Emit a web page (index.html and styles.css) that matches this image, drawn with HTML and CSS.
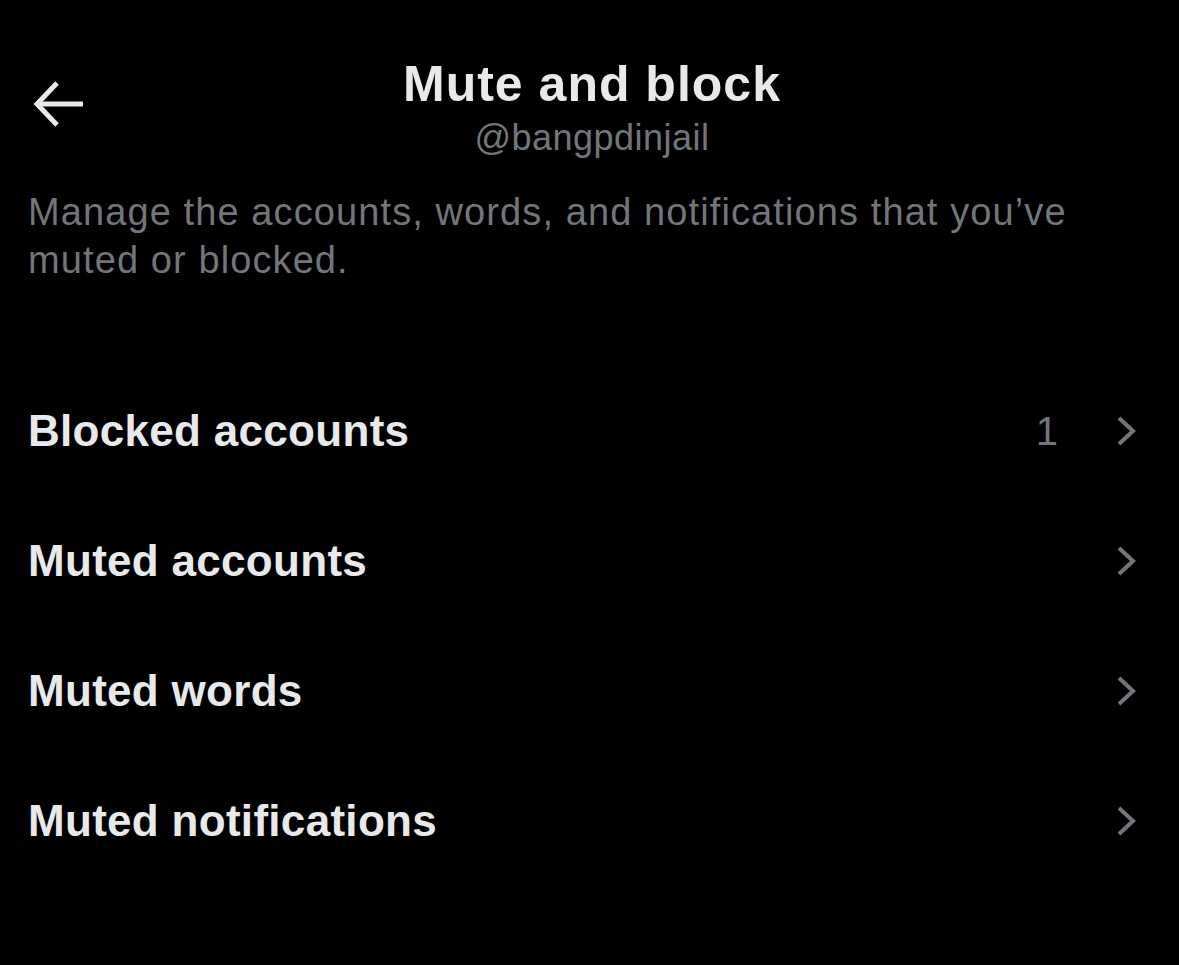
FILE: index.html
```html
<!DOCTYPE html>
<html lang="en">

<head>
    <meta charset="UTF-8">
    <title>Mute and block</title>
    <link rel="stylesheet" href="styles.css">
</head>

<body>
    <!-- Cabecera con flecha, título y usuario -->
    <header class="topbar">
        <a href="#" class="back" aria-label="Back">
            <svg width="52" height="46" viewBox="0 0 52 46" fill="none" stroke="#e7e9ea" stroke-width="5">
                <polyline points="24,2 4,23 24,44" />
                <line x1="4" y1="23" x2="50" y2="23" />
            </svg>
        </a>
        <div class="title-block">
            <h1 class="title">Mute and block</h1>
            <div class="handle">@bangpdinjail</div>
        </div>
        <div></div>
    </header>

    <p class="intro">Manage the accounts, words, and notifications that you’ve muted or blocked.</p>

    <!-- Lista de opciones -->
    <ul class="menu">
        <li class="menu-row">
            <span class="label">Blocked accounts</span>
            <span class="count">1</span>
            <svg class="chev" width="24" height="32" viewBox="0 0 24 32" fill="none" stroke="#71767b" stroke-width="4">
                <polyline points="4,3 18,16 4,29" />
            </svg>
        </li>
        <li class="menu-row">
            <span class="label">Muted accounts</span>
            <svg class="chev" width="24" height="32" viewBox="0 0 24 32" fill="none" stroke="#71767b" stroke-width="4">
                <polyline points="4,3 18,16 4,29" />
            </svg>
        </li>
        <li class="menu-row">
            <span class="label">Muted words</span>
            <svg class="chev" width="24" height="32" viewBox="0 0 24 32" fill="none" stroke="#71767b" stroke-width="4">
                <polyline points="4,3 18,16 4,29" />
            </svg>
        </li>
        <li class="menu-row">
            <span class="label">Muted notifications</span>
            <svg class="chev" width="24" height="32" viewBox="0 0 24 32" fill="none" stroke="#71767b" stroke-width="4">
                <polyline points="4,3 18,16 4,29" />
            </svg>
        </li>
    </ul>
</body>

</html>
```

FILE: styles.css
```css
/* Reseteo básico */
* {
    margin: 0;
    padding: 0;
    box-sizing: border-box;
}

body {
    background: #000;
    color: #e7e9ea;
    font-family: "Liberation Sans", Arial, sans-serif;
}

/* Cabecera */
.topbar {
    display: grid;
    grid-template-columns: 1fr auto 1fr;
    align-items: start;
    padding: 56px 28px 0 33px;
}

.back {
    display: flex;
    margin-top: 25px;
}

.title-block {
    text-align: center;
}

.title {
    font-size: 50px;
    line-height: 56px;
    font-weight: 700;
    letter-spacing: 1px;
}

.handle {
    margin-top: 4px;
    font-size: 36px;
    line-height: 44px;
    letter-spacing: 0.5px;
    color: #71767b;
}

/* Texto descriptivo */
.intro {
    margin-top: 28px;
    padding: 0 80px 0 28px;
    font-size: 38px;
    line-height: 48px;
    letter-spacing: 1.1px;
    color: #71767b;
}

/* Lista */
.menu {
    list-style: none;
    margin-top: 82px;
}

.menu-row {
    display: flex;
    align-items: center;
    height: 130px;
    padding: 0 40px 0 28px;
}

.label {
    flex-grow: 1;
    font-size: 44px;
    font-weight: 700;
    letter-spacing: 0.3px;
}

.count {
    font-size: 40px;
    color: #71767b;
    margin-right: 57px;
}

.chev {
    flex-shrink: 0;
}
```
